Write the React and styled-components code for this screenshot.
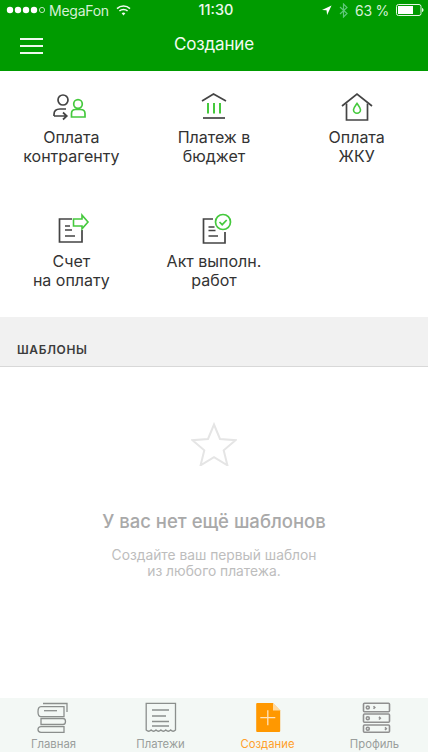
import React from "react";
import styled, { createGlobalStyle } from "styled-components";

const Global = createGlobalStyle`
  html, body { margin: 0; padding: 0; background: #fff; }
  body { font-family: Inter, "Liberation Sans", sans-serif; -webkit-font-smoothing: antialiased; }
`;

const Screen = styled.div`
  width: 428px;
  height: 752px;
  display: flex;
  flex-direction: column;
  overflow: hidden;
  background: #fff;
`;
const Header = styled.header`
  height: 71px;
  background: #009b00;
  color: #fff;
  display: flex;
  flex-direction: column;
  flex: none;
`;
const StatusBar = styled.div`
  height: 20px;
  padding: 0 4px 0 6px;
  display: flex;
  align-items: center;
  justify-content: space-between;
  font-size: 14px;
  letter-spacing: -0.25px;
  color: #d5f0d5;
  position: relative;
`;
const StatusGroup = styled.div`
  display: flex;
  align-items: center;
  gap: ${p => p.$gap || 5}px;
`;
const Clock = styled.div`
  position: absolute;
  left: 0;
  right: 0;
  top: 1px;
  text-align: center;
  font-size: 14.5px;
  letter-spacing: 0;
  font-weight: 500;
  color: #eaf8ea;
  padding-left: 4px;
`;
const NavBar = styled.div`
  flex: 1;
  display: flex;
  align-items: center;
  justify-content: center;
  position: relative;
  padding-bottom: 4px;
`;
const Title = styled.div`
  font-size: 17px;
  letter-spacing: -0.15px;
  color: #f2fbf2;
`;
const Burger = styled.div`
  position: absolute;
  left: 20px;
  top: 18px;
  width: 23px;
  height: 15.5px;
  display: flex;
  flex-direction: column;
  justify-content: space-between;
  & > i { display: block; height: 1.5px; background: #eef9ee; }
`;
const Actions = styled.div`
  display: grid;
  grid-template-columns: repeat(3, 1fr);
  grid-auto-rows: 123px;
  height: 246px;
  flex: none;
`;
const Action = styled.div`
  display: flex;
  flex-direction: column;
  align-items: center;
  padding-top: 18px;
`;
const ActionIcon = styled.svg`
  width: 40px;
  height: 36px;
  flex: none;
  fill: none;
`;
const ActionLabel = styled.div`
  margin-top: ${p => p.$gap}px;
  font-size: 16px;
  line-height: 19px;
  color: #333;
  text-align: center;
  white-space: pre-line;
`;
const SectionHead = styled.div`
  height: 50px;
  flex: none;
  box-sizing: border-box;
  background: #f1f1f1;
  border-bottom: 1px solid #d8d8d8;
  padding: 0 17px 9px;
  display: flex;
  align-items: flex-end;
  font-size: 12px;
  font-weight: 600;
  letter-spacing: 0.6px;
  color: #3c3c3c;
  line-height: 14px;
`;
const Empty = styled.div`
  flex: 1;
  display: flex;
  flex-direction: column;
  align-items: center;
  padding-top: 55px;
`;
const Star = styled.svg`
  width: 46px;
  height: 44px;
  fill: none;
  stroke: #e5e5e5;
  stroke-width: 2;
`;
const EmptyTitle = styled.div`
  margin-top: 45px;
  font-size: 18.5px;
  line-height: 20px;
  font-weight: 500;
  color: #a9a9a9;
`;
const EmptyText = styled.div`
  margin-top: 16px;
  font-size: 13.8px;
  line-height: 16px;
  color: #bdbdbd;
  text-align: center;
`;
const TabBar = styled.nav`
  height: 54px;
  flex: none;
  background: #f3f8f5;
  display: grid;
  grid-template-columns: repeat(4, 1fr);
`;
const Tab = styled.div`
  display: flex;
  flex-direction: column;
  align-items: center;
  padding-top: 4px;
  font-size: 11.3px;
  line-height: 14px;
  color: ${p => (p.$active ? "#ff9f2b" : "#9a9e9c")};
`;
const TabIcon = styled.svg`
  width: 32px;
  height: 32px;
  flex: none;
  fill: none;
  stroke: #8b8f8d;
  stroke-width: 1.3;
  margin-bottom: 3px;
  overflow: visible;
`;

const D = "#444";
const G = "#45c93d";

const Dots = () => (
  <svg width="39" height="8" viewBox="0 0 39 8">
    {[4, 12, 20, 28].map(x => <circle key={x} cx={x} cy="4" r="3.2" fill="#fff" />)}
    <circle cx="36" cy="4" r="2.6" fill="none" stroke="#cfeccf" strokeWidth="0.9" />
  </svg>
);
const Wifi = () => (
  <svg width="15" height="11" viewBox="0 0 15 11" fill="none" stroke="#f2fbf2" strokeWidth="1.5" style={{ marginLeft: 3 }}>
    <path d="M1 3.6a9.5 9.5 0 0 1 13 0" />
    <path d="M3.4 6a6 6 0 0 1 8.2 0" />
    <path d="M7.5 10.6 5.6 8.3a3 3 0 0 1 3.800 0z" fill="#f2fbf2" stroke="none" />
  </svg>
);
const Arrow = () => (
  <svg width="10" height="10" viewBox="0 0 11 11"><path d="M10.5.5 0 5.5l5 .4.6 5z" fill="#fff" /></svg>
);
const Bluetooth = () => (
  <svg width="9" height="15" viewBox="0 0 9 15" fill="none" stroke="#5fc77a" strokeWidth="1.2">
    <path d="M1 4l7 6.500L4.500 14V1L8 4.500 1 11" />
  </svg>
);
const Battery = () => (
  <svg width="28" height="12" viewBox="0 0 28 12">
    <rect x=".5" y=".5" width="24.500" height="11" rx="2" fill="none" stroke="#e6f6e6" />
    <rect x="2" y="2" width="15" height="8" fill="#fff" />
    <path d="M26 4c1 .2 1.500 1 1.500 2s-.5 1.800-1.500 2z" fill="#e6f6e6" />
  </svg>
);

const icons = {
  person: (
    <>
      <circle cx="12" cy="11" r="5" stroke={D} strokeWidth="1.700" />
      <path d="M3 27v-1.500c0-3.500 2.500-5.500 6-5.500h6" stroke={D} strokeWidth="1.700" />
      <path d="M3 27h12.500M12 23.500l3.800 3.500-3.800 3.500" stroke={D} strokeWidth="1.700" />
      <circle cx="27" cy="15" r="4.300" stroke={G} strokeWidth="1.700" />
      <path d="M20.500 28v-3.500c0-2.500 1.800-4 4-4h5c2.500 0 4.500 1.500 4.500 4V28z" stroke={G} strokeWidth="1.700" />
    </>
  ),
  bank: (
    <>
      <path d="M8 12 19.500 5 32 12" stroke={D} strokeWidth="1.700" />
      <path d="M14 14v10.500M20 14v10.500M26 14v10.500" stroke={G} strokeWidth="2" />
      <path d="M9 29h22" stroke={D} strokeWidth="1.700" />
    </>
  ),
  house: (
    <>
      <path d="M5 17 20 5l15 12" stroke={D} strokeWidth="1.700" />
      <path d="M9.500 14.500V31h21V14.500" stroke={D} strokeWidth="1.700" />
      <path d="M20 14.500c-2 2.800-3.500 4.500-3.500 6.300a3.500 3.500 0 0 0 7 0c0-1.800-1.500-3.500-3.500-6.300z" stroke={G} strokeWidth="1.600" />
    </>
  ),
  invoice: (
    <>
      <path d="M21 7H8.500V30H31V18M14 14h5M14 18h7M14 24h10" stroke={D} strokeWidth="1.700" />
      <path d="M22.500 7h8.500V3.200L37 10l-6 6.800V14h-8.500z" stroke={G} strokeWidth="1.600" />
    </>
  ),
  act: (
    <>
      <path d="M19 7H9.500V31H31V20M14.500 15h6M14.500 18.500h7M14.500 24h9.500" stroke={D} strokeWidth="1.700" />
      <circle cx="29" cy="10" r="7.500" stroke={G} strokeWidth="1.700" />
      <path d="M25.500 10l2.700 2.700 4.500-4.700" stroke={G} strokeWidth="1.700" />
    </>
  ),
};

const actions = [
  { icon: "person", text: "Оплата\nконтрагенту", gap: 3 },
  { icon: "bank", text: "Платеж в\nбюджет", gap: 3 },
  { icon: "house", text: "Оплата\nЖКУ", gap: 3 },
  { icon: "invoice", text: "Счет\nна оплату", gap: 4 },
  { icon: "act", text: "Акт выполн.\nработ", gap: 4 },
];

export default function App() {
  return (
    <Screen>
      <Global />
      <Header>
        <StatusBar>
          <StatusGroup $gap={4}><Dots /><span>MegaFon</span><Wifi /></StatusGroup>
          <Clock>11:30</Clock>
          <StatusGroup $gap={7}><Arrow /><Bluetooth /><span>63 %</span><Battery /></StatusGroup>
        </StatusBar>
        <NavBar>
          <Burger><i /><i /><i /></Burger>
          <Title>Создание</Title>
        </NavBar>
      </Header>
      <Actions>
        {actions.map(a => (
          <Action key={a.icon}>
            <ActionIcon viewBox="0 0 40 36">{icons[a.icon]}</ActionIcon>
            <ActionLabel $gap={a.gap}>{a.text}</ActionLabel>
          </Action>
        ))}
      </Actions>
      <SectionHead>ШАБЛОНЫ</SectionHead>
      <Empty>
        <Star viewBox="0 0 46 44"><path d="M23 2.500l6 14.500 15.500 1.200-11.800 10.100 3.700 15-13.400-8.100-13.400 8.100 3.700-15L1.500 18.200 17 17z" /></Star>
        <EmptyTitle>У вас нет ещё шаблонов</EmptyTitle>
        <EmptyText>Создайте ваш первый шаблон<br />из любого платежа.</EmptyText>
      </Empty>
      <TabBar>
        <Tab>
          <TabIcon viewBox="0 0 32 32">
            <path d="M5 1.500h24V10" />
            <path d="M26 4.700H3Q0 4.700 0 9.700T3 14.700H26z" />
            <path d="M6 8.700h13" />
            <path d="M3 16.500h22q2.500 0 2.500 3t-2.500 3H3z" />
            <path d="M26 24.700H3q-3 0-3 2.800t3 2.800h23z" />
          </TabIcon>
          Главная
        </Tab>
        <Tab>
          <TabIcon viewBox="0 0 32 32">
            <path d="M1.200 1.300h29.300v26.700q-2.400 2.500-4.800 0-2.400 2.500-4.900 0-2.400 2.500-4.900 0-2.400 2.500-4.900 0-2.400 2.500-4.900 0-2.400 2.500-4.900 0z" />
            <path d="M7 8h17M7 14h14M7 19.500h17M7 24h17" />
          </TabIcon>
          Платежи
        </Tab>
        <Tab $active>
          <TabIcon viewBox="0 0 32 32" style={{ stroke: "none" }}>
            <path d="M5.200 1H20.800L28.200 8.500V29a1 1 0 0 1-1 1H5.200a1 1 0 0 1-1-1V2a1 1 0 0 1 1-1z" fill="#ff9800" />
            <path d="M21 1l7.200 7.500H21z" fill="#ffd9a0" />
            <path d="M15.800 8.200v15M8.300 15.700h15" stroke="#ffe3bd" strokeWidth="1.300" />
          </TabIcon>
          Создание
        </Tab>
        <Tab>
          <TabIcon viewBox="0 0 32 32" style={{ strokeWidth: 1.6, stroke: "#909090" }}>
            <rect x="4.500" y="1.300" width="26" height="8.400" rx="1" />
            <rect x="4.500" y="12" width="26" height="8.300" rx="1" />
            <rect x="4.500" y="23" width="26" height="7.300" rx="1" />
            <circle cx="8.800" cy="5.500" r="1.500" /><circle cx="8.800" cy="16.200" r="1.500" /><circle cx="8.800" cy="26.700" r="1.500" />
            <path d="M14.500 4.200l1.300 1.300-1.300 1.300M20 14.900l1.300 1.300-1.300 1.300M26 25.400l1.300 1.300-1.300 1.300" />
          </TabIcon>
          Профиль
        </Tab>
      </TabBar>
    </Screen>
  );
}
